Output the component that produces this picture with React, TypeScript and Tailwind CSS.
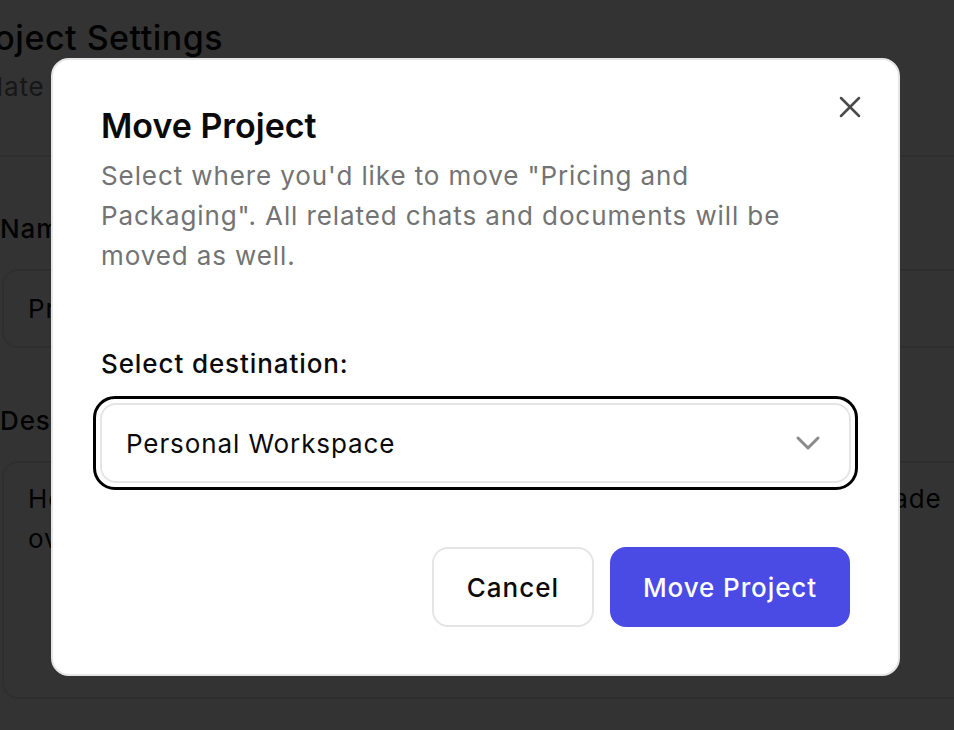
import { ChevronDown, X } from 'lucide-react';

export default function App() {
  return (
    <div className="relative h-[730px] w-[954px] overflow-hidden bg-white font-['Inter',sans-serif] text-[#0a0a0a]">
      {/* Page behind the dialog */}
      <div className="pt-[18px]">
        <h1 className="-ml-[41px] whitespace-nowrap text-[34px] font-medium leading-[40px] tracking-[0.5px]">
          Project Settings
        </h1>
        <p className="-ml-[50px] mt-[9px] whitespace-nowrap text-[26px] leading-[40px] tracking-[0.9px] text-[#737373]">
          Update your project details
        </p>
      </div>
      <div className="-ml-[51px] mt-[48px] w-[1100px] rounded-[16px] border-2 border-[#e5e5e5] pl-[51px] pt-[52px] pb-[40px] tracking-[0.9px]">
        <div className="-ml-[2px] text-[26px] font-medium leading-[40px]">Name</div>
        <div className="mt-[20px] flex h-[79px] w-[1000px] items-center rounded-[16px] border-2 border-[#e5e5e5] px-[24px] text-[26px]">
          Pricing and Packaging
        </div>
        <div className="-ml-[2px] mt-[53px] text-[26px] font-medium leading-[40px]">Description</div>
        <div className="mt-[20px] h-[238px] w-[1000px] rounded-[16px] border-2 border-[#e5e5e5] px-[24px] py-[16px] text-[26px] leading-[40px] [word-spacing:1.6px]">
          <div className="whitespace-nowrap">How we think about pricing tiers, discounts, and the decisions made</div>
          <div className="whitespace-nowrap">over the last few quarters.</div>
        </div>
      </div>

      {/* Overlay */}
      <div className="absolute inset-0 bg-black/80" />

      {/* Dialog */}
      <div className="absolute left-[51px] top-[58px] w-[849px] rounded-[18px] border-2 border-[#e5e5e5] bg-white pl-[48px] pr-[48px] pt-[46px] pb-[47px]">
        <button className="absolute right-[30px] top-[29px] flex h-[36px] w-[36px] items-center justify-center text-[#4a4a4a]">
          <X size={36} strokeWidth={1.7} />
        </button>
        <h2 className="text-[34px] font-semibold leading-[40px]">Move Project</h2>
        <p className="mt-[10px] text-[26px] leading-[40px] tracking-[0.9px] text-[#737373]">
          Select where you'd like to move "Pricing and Packaging". All related chats and documents will be moved as well.
        </p>
        <div className="mt-[68px] text-[26px] font-medium leading-[40px] tracking-[0.9px]">Select destination:</div>
        <div className="-mx-[8px] mt-[12px] rounded-[22px] border-[3px] border-black p-[4px]">
          <div className="flex h-[80px] items-center justify-between rounded-[16px] border-2 border-[#e5e5e5] pl-[24px] pr-[21px] text-[26px] tracking-[0.9px]">
            <span>Personal Workspace</span>
            <ChevronDown size={40} strokeWidth={1.8} className="text-[#8a8a8a]" />
          </div>
        </div>
        <div className="mt-[57px] flex justify-end gap-[16px]">
          <button className="h-[80px] rounded-[16px] border-2 border-[#e5e5e5] bg-white px-[33px] text-[26px] font-medium tracking-[1px]">
            Cancel
          </button>
          <button className="h-[80px] rounded-[16px] bg-[#4a4ae5] px-[33px] text-[26px] font-medium tracking-[0.9px] text-white">
            Move Project
          </button>
        </div>
      </div>
    </div>
  );
}
